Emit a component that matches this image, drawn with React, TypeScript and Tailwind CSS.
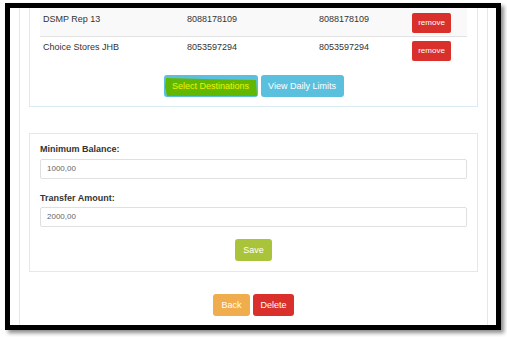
import React from 'react';

const rows = [
    { name: 'DSMP Rep 13', from: '8088178109', to: '8088178109' },
    { name: 'Choice Stores JHB', from: '8053597294', to: '8053597294' },
];

function Btn({ color, children, className = '' }: { color: string; children: React.ReactNode; className?: string }) {
    return (
        <button className={`relative h-[22px] whitespace-nowrap rounded-[3px] px-0 text-[9px] leading-none text-white ${color} ${className}`}>
            {children}
        </button>
    );
}

export default function App() {
    return (
        <div className="relative h-[337px] w-[507px] overflow-hidden bg-white font-['Liberation_Sans',Arial,sans-serif] text-[#333]">
            {/* screenshot frame */}
            <div className="ml-[5px] mt-[3px] h-[327px] w-[496px] border-[5px] border-black bg-white shadow-[3px_3px_4px_rgba(0,0,0,0.45)]">
                <div className="h-full overflow-hidden pl-[9px] pr-[8px]">
                    <div className="h-full border-x border-[#d9ecf4] px-[9px]">
                        {/* destinations panel */}
                        <div className="border-x border-b border-[#d9ecf4] px-[10px] pb-[9px]">
                            <table className="w-full border-collapse text-[9px]">
                                <tbody>
                                    {rows.map((r, i) => (
                                        <tr key={r.name} className={i === 0 ? 'bg-[#f9f9f9]' : 'border-t border-[#e2e2e2]'}>
                                            <td className={`w-[147px] pl-[3px] align-top leading-[13px] ${i === 0 ? 'pt-[5px]' : 'pt-[4px]'}`}>{r.name}</td>
                                            <td className={`w-[132px] align-top leading-[13px] ${i === 0 ? 'pt-[5px]' : 'pt-[4px]'}`}>{r.from}</td>
                                            <td className={`w-[93px] align-top leading-[13px] ${i === 0 ? 'pt-[5px]' : 'pt-[4px]'}`}>{r.to}</td>
                                            <td className={`align-top ${i === 0 ? 'pb-[3px] pt-[5px]' : 'pb-[4px] pt-[4px]'}`}>
                                                <button className="h-[20px] w-[39px] rounded-[2px] bg-[#d9302c] text-[8px] leading-none text-white">remove</button>
                                            </td>
                                        </tr>
                                    ))}
                                </tbody>
                            </table>
                            <div className="mt-[10px] flex justify-center gap-[3px]">
                                <Btn color="bg-[#5bc0de]" className="w-[94px] overflow-hidden">
                                    <svg className="absolute inset-0" width="94" height="22" viewBox="0 0 94 22">
                                        <polygon points="2,3 40,4 92,5 93,21 3,21 1,12" fill="#62b800" />
                                    </svg>
                                    <span className="relative text-[#eef200]">Select Destinations</span>
                                </Btn>
                                <Btn color="bg-[#5bc0de]" className="w-[83px]">View Daily Limits</Btn>
                            </div>
                        </div>

                        {/* settings panel */}
                        <div className="mt-[26px] border border-[#d9ecf4] px-[10px] pb-[10px] pt-[9px]">
                            <div className="text-[9px] font-bold leading-[13px] text-[#333]">Minimum Balance:</div>
                            <div className="mt-[3px] flex h-[20px] items-center rounded-[2px] border border-[#e0e0e0] px-[6px] text-[8px] text-[#666]">1000,00</div>
                            <div className="mt-[13px] text-[9px] font-bold leading-[13px] text-[#333]">Transfer Amount:</div>
                            <div className="mt-[2px] flex h-[20px] items-center rounded-[2px] border border-[#e0e0e0] px-[6px] text-[8px] text-[#666]">2000,00</div>
                            <div className="mt-[12px] flex justify-center">
                                <Btn color="bg-[#a9c43a]" className="w-[37px]">Save</Btn>
                            </div>
                        </div>

                        <div className="mt-[22px] flex justify-center gap-[3px]">
                            <Btn color="bg-[#f0ad4e]" className="h-[21px] w-[37px]">Back</Btn>
                            <Btn color="bg-[#d9302c]" className="h-[21px] w-[41px]">Delete</Btn>
                        </div>
                    </div>
                </div>
            </div>
        </div>
    );
}
